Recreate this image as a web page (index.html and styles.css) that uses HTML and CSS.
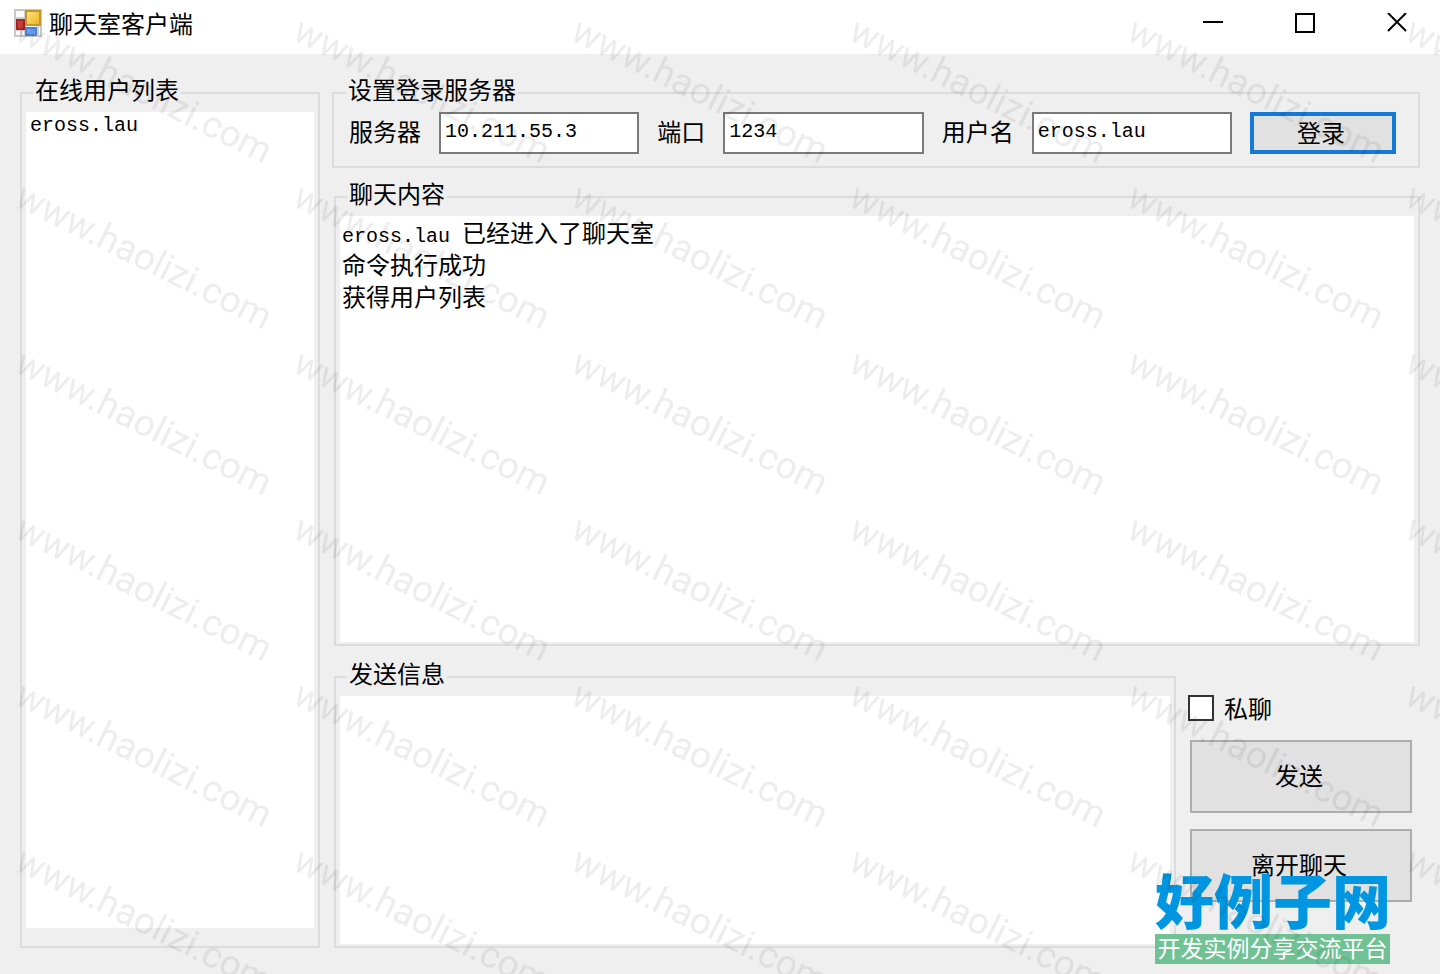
FILE: index.html
```html
<!DOCTYPE html>
<html lang="zh-CN">

<head>
  <meta charset="UTF-8">
  <meta name="viewport" content="width=device-width, initial-scale=1.0">
  <title>聊天室客户端</title>
  <link rel="stylesheet" href="styles.css">
</head>

<body>
  <header class="titlebar">
    <svg class="app-icon" viewBox="0 0 28 28" aria-hidden="true">
      <defs>
        <linearGradient id="gold" x1="0" y1="0" x2="1" y2="1">
          <stop offset="0" stop-color="#ffe680" />
          <stop offset="1" stop-color="#eab020" />
        </linearGradient>
      </defs>
      <rect x="1" y="1" width="26" height="26" fill="#fafafa" stroke="#c8c8c8" stroke-width="2" />
      <path d="M2 9h9M11 2v7M2 21h9M7 21v5M11 17v9M24 17v9" stroke="#d0d0d0" stroke-width="2" />
      <rect x="12" y="2" width="14" height="14" fill="url(#gold)" stroke="#c4972c" stroke-width="2" />
      <rect x="3" y="11" width="7" height="9" fill="#c8403c" stroke="#a82420" stroke-width="2" />
      <rect x="12" y="19" width="10" height="7" fill="#6ca4f4" stroke="#4f80d8" stroke-width="2" />
    </svg>
    <h1>聊天室客户端</h1>
    <div class="window-buttons">
      <button type="button" aria-label="最小化"><svg viewBox="0 0 20 20"><path d="M0 9h20" /></svg></button>
      <button type="button" aria-label="最大化"><svg viewBox="0 0 20 20"><path d="M1 1h18v18H1z" /></svg></button>
      <button type="button" aria-label="关闭"><svg viewBox="0 0 20 20"><path d="M1 0l18 18M19 0L1 18" /></svg></button>
    </div>
  </header>

  <main>
    <fieldset class="group users">
      <legend>在线用户列表</legend>
      <ul class="user-list">
        <li class="latin">eross.lau</li>
      </ul>
    </fieldset>

    <div class="content">
      <fieldset class="group login">
        <legend>设置登录服务器</legend>
        <form class="login-form">
          <label for="server">服务器</label>
          <input class="latin" id="server" type="text" value="10.211.55.3">
          <label for="port">端口</label>
          <input class="latin" id="port" type="text" value="1234">
          <label for="username">用户名</label>
          <input class="latin" id="username" type="text" value="eross.lau">
          <button class="btn btn-login" type="button">登录</button>
        </form>
      </fieldset>

      <fieldset class="group chat">
        <legend>聊天内容</legend>
        <div class="chat-log">
          <p><span class="latin">eross.lau </span>已经进入了聊天室</p>
          <p>命令执行成功</p>
          <p>获得用户列表</p>
        </div>
      </fieldset>

      <div class="bottom">
        <fieldset class="group send">
          <legend>发送信息</legend>
          <textarea aria-label="发送信息"></textarea>
        </fieldset>
        <div class="actions">
          <label class="private"><input type="checkbox">私聊</label>
          <button class="btn" type="button">发送</button>
          <button class="btn" type="button">离开聊天</button>
        </div>
      </div>
    </div>
  </main>

  <div class="site-logo">
    <strong>好例子网</strong>
    <span>开发实例分享交流平台</span>
  </div>

  <svg class="watermark" aria-hidden="true">
    <defs>
      <pattern id="mark" x="2" y="12" width="278" height="166" patternUnits="userSpaceOnUse">
        <text transform="translate(11 27) rotate(26.5)">www.haolizi.com</text>
      </pattern>
    </defs>
    <rect width="100%" height="100%" fill="url(#mark)" />
  </svg>
</body>

</html>
```

FILE: styles.css
```css
* {
  box-sizing: border-box;
}

html,
body {
  margin: 0;
  padding: 0;
  height: 100%;
}

body {
  display: flex;
  flex-direction: column;
  position: relative;
  overflow: hidden;
  background: #efefef;
  color: #000;
  font: 24px/32px "Noto Sans CJK SC", sans-serif;
}

button,
input,
textarea {
  margin: 0;
  font: inherit;
  color: inherit;
  border-radius: 0;
}

.latin {
  font-family: "Liberation Mono", monospace;
  font-size: 20px;
  line-height: 28px;
  white-space: pre;
}

.titlebar {
  display: flex;
  align-items: center;
  height: 54px;
  padding: 0 33px 8px 14px;
  background: #fff;
}

.app-icon {
  width: 28px;
  height: 28px;
  margin-right: 7px;
}

h1 {
  margin: 0;
  font-size: 24px;
  font-weight: normal;
}

.window-buttons {
  display: flex;
  gap: 72px;
  margin-left: auto;
}

.window-buttons button {
  display: flex;
  padding: 0;
  border: 0;
  background: none;
}

.window-buttons svg {
  width: 20px;
  height: 20px;
  fill: none;
  stroke: #000;
  stroke-width: 2;
}

main {
  flex: 1;
  display: flex;
  gap: 12px;
  min-height: 0;
  padding: 20px 20px 26px;
}

.group {
  display: flex;
  flex-direction: column;
  min-width: 0;
  margin: 0;
  padding: 0 4px 2px;
  border: 2px solid #dcdcdc;
}

.group legend {
  height: 38px;
  margin-left: 7px;
  padding: 0 2px;
  line-height: 30px;
}

.users {
  flex: 0 0 300px;
  padding-bottom: 18px;
}

.user-list {
  flex: 1;
  margin: 0;
  padding: 0 4px;
  list-style: none;
  background: #fff;
}

.content {
  flex: 1;
  display: flex;
  flex-direction: column;
  min-width: 0;
}

.login {
  padding: 0 22px 12px 15px;
}

.login legend {
  margin-left: -3px;
}

.login-form {
  display: flex;
  align-items: center;
  gap: 18px;
}

.login-form label {
  padding-bottom: 4px;
}

.login-form input {
  flex: 1;
  min-width: 0;
  height: 42px;
  padding: 0 4px 4px;
  border: 2px solid #7a7a7a;
  background: #fff;
}

.btn {
  padding: 0 4px 4px 0;
  border: 2px solid #adadad;
  background: #e1e1e1;
}

.btn-login {
  width: 146px;
  height: 42px;
  border: 4px solid #1479d7;
}

.chat {
  flex: 1;
  margin: 10px 0 0 2px;
}

.chat-log {
  flex: 1;
  padding: 0 2px;
  background: #fff;
}

.chat-log p {
  height: 32px;
  margin: 0;
}

.chat-log .latin {
  line-height: 20px;
}

.bottom {
  display: flex;
  gap: 12px;
  height: 290px;
  margin: 12px 8px 0 2px;
}

.send {
  flex: 1;
}

.send textarea {
  flex: 1;
  padding: 2px;
  border: 0;
  resize: none;
  background: #fff;
}

.actions {
  display: flex;
  flex-direction: column;
  gap: 16px;
  width: 224px;
  padding-top: 34px;
}

.private {
  display: flex;
  align-items: center;
  gap: 10px;
}

.private input {
  appearance: none;
  width: 26px;
  height: 26px;
  border: 2px solid #333;
  background: #fff;
}

.actions .btn {
  height: 73px;
  margin-left: 2px;
}

.watermark {
  position: absolute;
  top: 0;
  left: 0;
  width: 100%;
  height: 100%;
  pointer-events: none;
}

.watermark text {
  fill: #000;
  fill-opacity: 0.07;
  font: 37px Roboto, sans-serif;
}

.site-logo {
  position: absolute;
  right: 50px;
  bottom: 10px;
  width: 235px;
  text-align: center;
  white-space: nowrap;
}

.site-logo strong {
  display: block;
  padding-bottom: 4px;
  color: #0096e1;
  font-size: 59px;
  font-weight: 900;
  line-height: 62px;
}

.site-logo span {
  display: block;
  padding-bottom: 4px;
  background: #70c294;
  color: #fff;
  font-size: 23px;
  line-height: 26px;
}
```
